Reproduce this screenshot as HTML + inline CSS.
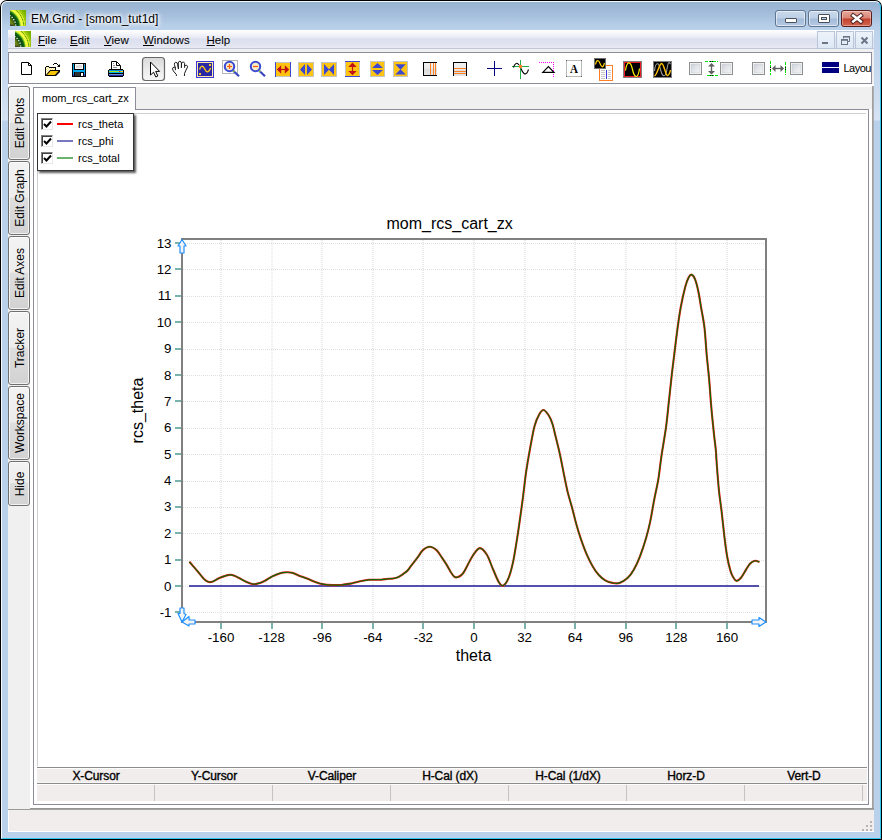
<!DOCTYPE html><html><head><meta charset="utf-8"><title>EM.Grid - [smom_tut1d]</title><style>
*{box-sizing:border-box;margin:0;padding:0}
html,body{width:882px;height:840px;overflow:hidden;background:#fff}
body{position:relative;font-family:"Liberation Sans",sans-serif;font-size:12px;color:#000}
.abs{position:absolute}
#win{position:absolute;left:0;top:0;width:882px;height:840px;border-radius:7px 7px 0 0;background:#000;overflow:hidden}
#glass{position:absolute;left:1px;top:1px;width:880px;height:838px;border-radius:6px 6px 0 0;
 background:linear-gradient(180deg,#97b4d3 1px,#9fb9d7 9px,#a5bfdc 14px,#adc6e1 19px,#b6cde7 24px,#b9d0ea 28px,#bdd3ec 30px,#c9dbf0 84px,#d5e3f4 119px,#b9d1ea 120px,#b9d1ea 100%);}
#glassr{display:none}
#hl{position:absolute;left:1px;top:1px;width:880px;height:838px;border-radius:6px 6px 0 0;border:1px solid rgba(255,255,255,.9);border-right-color:#35c6f0;border-bottom-color:#35c6f0}
#title{position:absolute;left:31px;top:11px;height:16px;line-height:16px;font-size:12px;white-space:nowrap;
 text-shadow:0 0 6px #fff,0 0 6px #fff,0 0 4px #fff,0 0 3px #fff}
.cb{position:absolute;top:10px;height:17px;border:1px solid #5f7590;border-radius:3px;
 background:linear-gradient(180deg,#c9d9ec 0%,#bccfe6 48%,#a3bbd9 52%,#b4c9e3 100%);box-shadow:inset 0 0 0 1px rgba(255,255,255,.55)}
#cclose{background:linear-gradient(180deg,#e7a99b 0%,#d98474 48%,#c2402c 52%,#d2674f 100%);border-color:#5a1b1b;box-shadow:inset 0 0 0 1px rgba(255,255,255,.35)}
#menubar{position:absolute;left:8px;top:30px;width:866px;height:19px;
 background:linear-gradient(180deg,#ffffff 0px,#f4f5fa 4px,#e6e8f3 8px,#dcdfee 9px,#e0e3f0 14px,#e6e8f3 17.5px,#c3c7d6 18px,#c3c7d6 19px)}
.mi{position:absolute;top:33px;height:14px;line-height:14px;font-size:11.5px;white-space:nowrap}
.mi u{text-decoration:underline;text-underline-offset:1px}
.mdi{position:absolute;top:31px;width:18px;height:18px;border:1px solid #b9c6da;background:linear-gradient(180deg,#eef3fa,#dde8f5)}
#client{position:absolute;left:8px;top:49px;width:866px;height:783px;background:#f0f0f0}
#tbar{position:absolute;left:8px;top:52px;width:864px;height:32px;border:1px solid #8b8e9a;background:#fff;overflow:hidden}
#wband{position:absolute;left:8px;top:84px;width:866px;height:3px;background:#fff}
.stab{position:absolute;left:8px;width:22px;border:1px solid #707070;border-radius:3px;
 background:linear-gradient(180deg,#f3f3f3 0%,#ececec 49%,#dedede 50%,#d2d2d2 100%);box-shadow:inset 0 0 0 1px rgba(255,255,255,.7)}
.stab span{position:absolute;left:calc(50% + 1px);top:50%;white-space:nowrap;font-size:12px;line-height:14px;transform:translate(-50%,-50%) rotate(-90deg)}
#white{position:absolute;left:30px;top:87px;width:842px;height:721px;background:#fff}
#strip{position:absolute;left:136px;top:87px;width:736px;height:22px;background:#f0f0f0}
#page{position:absolute;left:33px;top:109px;width:836px;height:696px;border:1px solid #8b8e9a;border-top:none}
#pagetop{position:absolute;left:135px;top:109px;width:734px;height:1px;background:#8b8e9a}
#tab{position:absolute;left:33px;top:87px;width:103px;height:23px;border:1px solid #8b8e9a;border-bottom:none;background:#fff}
#tab span{position:absolute;left:8px;top:4px;font-size:11px;line-height:13px;white-space:nowrap}
#rborder{position:absolute;left:872px;top:86px;width:2px;height:724px;background:linear-gradient(90deg,#9a9a9a,#b4b4b4)}
#gtop{position:absolute;left:37px;top:113px;width:829px;height:1px;background:#d0d0d0}
#gleft{position:absolute;left:37px;top:113px;width:1px;height:653px;background:#d0d0d0}
#legend{position:absolute;left:37px;top:113px;width:97px;height:58px;border:1px solid #333;background:#fff;box-shadow:2px 2px 2px rgba(0,0,0,.65)}
.lg{position:absolute;left:41px;font-size:11px;line-height:13px;white-space:nowrap}
.chk{position:absolute;left:41px;width:12px;height:12px;background:#fff;border:1px solid #808080;border-right-color:#e8e8e8;border-bottom-color:#e8e8e8;box-shadow:inset 1px 1px 0 #404040}
#tbl{position:absolute;left:37px;top:767px;width:830px;height:34px;background:#f0edec}
#tbl .l1{position:absolute;left:0;top:0;width:100%;height:2px;background:linear-gradient(180deg,#8c8c8c 50%,#fff 50%)}
#tbl .l2{position:absolute;left:0;top:15px;width:100%;height:3px;background:linear-gradient(180deg,#f8f6f6 33%,#8c8c8c 33%,#8c8c8c 67%,#fff 67%)}
.th{position:absolute;top:770px;width:118px;text-align:center;font-size:12px;font-weight:normal;-webkit-text-stroke:.35px #000;letter-spacing:-.1px;line-height:12px;white-space:nowrap}
.sep{position:absolute;top:785px;width:1px;height:16px;background:#c4c2c2}
#dline{position:absolute;left:30px;top:808px;width:844px;height:2px;background:linear-gradient(180deg,#8f8f8f,#a8a8a8)}
#dline2{position:absolute;left:8px;top:809px;width:22px;height:1px;background:#9a9a9a}
#status{position:absolute;left:8px;top:810px;width:866px;height:22px;background:#f0edec;border-left:1px solid #fff;border-bottom:1px solid #fff}
</style></head><body>
<div id="win"><div id="glass"></div><div id="glassr"></div><div id="hl"></div></div>
<svg class="abs" style="left:10px;top:10px" width="16" height="16" viewBox="0 0 16 16">
<defs><radialGradient id="ig10" gradientUnits="userSpaceOnUse" cx="-8" cy="17" r="30"><stop offset=".36" stop-color="#6a8414"/><stop offset=".43" stop-color="#3e5c10"/><stop offset=".45" stop-color="#0c4612"/><stop offset=".53" stop-color="#0a5212"/><stop offset=".575" stop-color="#1c6c18"/><stop offset=".605" stop-color="#7cc422"/><stop offset=".64" stop-color="#ecfa3c"/><stop offset=".69" stop-color="#f8ff44"/><stop offset=".715" stop-color="#c4de20"/><stop offset=".727" stop-color="#5c9a10"/><stop offset=".74" stop-color="#b4da18"/><stop offset=".77" stop-color="#e0f030"/><stop offset=".79" stop-color="#8cbc10"/><stop offset=".81" stop-color="#a4cc10"/><stop offset=".86" stop-color="#80b800"/><stop offset="1" stop-color="#6ca800"/></radialGradient></defs>
<rect width="16" height="16" fill="url(#ig10)"/>
<circle cx="-8" cy="17" r="13.9" fill="none" stroke="#fff" stroke-width="1.1" stroke-dasharray="1.4 1.4"/>
<rect x="0" y="14.5" width="3.5" height="1.5" fill="#3a3a30" opacity=".8"/>
</svg>
<div id="title">EM.Grid - [smom_tut1d]</div>
<div class="cb" style="left:775px;width:31px"><div class="abs" style="left:9px;top:7px;width:12px;height:5px;border:1px solid #4a5058;border-radius:1px;background:#fff"></div></div>
<div class="cb" style="left:808px;width:31px"><div class="abs" style="left:9px;top:3px;width:12px;height:9px;border:1px solid #4a5058;border-radius:1px;background:#fff"><div class="abs" style="left:2px;top:2px;width:6px;height:3px;border:1px solid #4a5058;background:#b9cde6"></div></div></div>
<div class="cb" id="cclose" style="left:841px;width:31px"><svg class="abs" style="left:7px;top:1px" width="16" height="13" viewBox="0 0 16 13"><path d="M4.2 3.6 L11.8 9.4 M11.8 3.6 L4.2 9.4" stroke="#4a2020" stroke-width="4.4" stroke-linecap="square"/><path d="M4.2 3.6 L11.8 9.4 M11.8 3.6 L4.2 9.4" stroke="#fff" stroke-width="2.5" stroke-linecap="square"/></svg></div>
<div id="client"></div>
<div id="menubar"></div>
<svg class="abs" style="left:15px;top:31px" width="16" height="16" viewBox="0 0 16 16">
<defs><radialGradient id="ig15" gradientUnits="userSpaceOnUse" cx="-8" cy="17" r="30"><stop offset=".36" stop-color="#6a8414"/><stop offset=".43" stop-color="#3e5c10"/><stop offset=".45" stop-color="#0c4612"/><stop offset=".53" stop-color="#0a5212"/><stop offset=".575" stop-color="#1c6c18"/><stop offset=".605" stop-color="#7cc422"/><stop offset=".64" stop-color="#ecfa3c"/><stop offset=".69" stop-color="#f8ff44"/><stop offset=".715" stop-color="#c4de20"/><stop offset=".727" stop-color="#5c9a10"/><stop offset=".74" stop-color="#b4da18"/><stop offset=".77" stop-color="#e0f030"/><stop offset=".79" stop-color="#8cbc10"/><stop offset=".81" stop-color="#a4cc10"/><stop offset=".86" stop-color="#80b800"/><stop offset="1" stop-color="#6ca800"/></radialGradient></defs>
<rect width="16" height="16" fill="url(#ig15)"/>
<circle cx="-8" cy="17" r="13.9" fill="none" stroke="#fff" stroke-width="1.1" stroke-dasharray="1.4 1.4"/>
<rect x="0" y="14.5" width="3.5" height="1.5" fill="#3a3a30" opacity=".8"/>
</svg>
<div class="mi" style="left:38px"><u>F</u>ile</div>
<div class="mi" style="left:70px"><u>E</u>dit</div>
<div class="mi" style="left:104px"><u>V</u>iew</div>
<div class="mi" style="left:143px"><u>W</u>indows</div>
<div class="mi" style="left:206.5px"><u>H</u>elp</div>
<div class="mdi" style="left:817px"><div class="abs" style="left:4px;top:10px;width:6px;height:2px;background:#6a7686"></div></div>
<div class="mdi" style="left:836px"><svg class="abs" style="left:3px;top:3px" width="11" height="11" viewBox="0 0 11 11"><path d="M3.5 3.5 V1.5 H9.5 V6.5 H7.5" fill="none" stroke="#6a7686" stroke-width="1"/><rect x="3" y="1" width="7" height="1.6" fill="#6a7686"/><rect x="1.5" y="4.5" width="6" height="5" fill="none" stroke="#6a7686"/><rect x="1" y="4" width="7" height="1.8" fill="#6a7686"/></svg></div>
<div class="mdi" style="left:855px"><svg class="abs" style="left:4px;top:4px" width="9" height="9" viewBox="0 0 9 9"><path d="M1.5 1.5 L7.5 7.5 M7.5 1.5 L1.5 7.5" stroke="#6a7686" stroke-width="2"/></svg></div>
<div id="tbar">
<svg class="abs" style="left:-9px;top:-53px" width="882" height="840" viewBox="0 0 882 840" font-family="Liberation Sans, sans-serif">
<defs><linearGradient id="selg" x1="0" y1="0" x2="0" y2="1"><stop offset="0" stop-color="#d9d9d9"/><stop offset=".5" stop-color="#ebebeb"/><stop offset="1" stop-color="#f7f7f7"/></linearGradient><linearGradient id="cbg" x1="0" y1="0" x2="1" y2="1"><stop offset="0" stop-color="#cdd2da"/><stop offset=".6" stop-color="#e6e8ec"/><stop offset="1" stop-color="#f6f6f6"/></linearGradient><linearGradient id="gg" x1="0" y1="0" x2="0" y2="1"><stop offset="0" stop-color="#f2f2f2"/><stop offset=".5" stop-color="#e8e8e8"/><stop offset=".5" stop-color="#dcdcdc"/><stop offset="1" stop-color="#e4e4e4"/></linearGradient></defs>
<rect x="142.5" y="57.5" width="22" height="23" rx="3" fill="url(#selg)" stroke="#686868" stroke-width="1.2"/>
<g shape-rendering="crispEdges">
<path d="M21.5 62.5 H28.5 L31.5 65.5 V74.5 H21.5 Z" fill="#fff" stroke="#000" shape-rendering="auto"/><path d="M28.5 62.5 V65.5 H31.5" fill="none" stroke="#000" shape-rendering="auto"/>
<rect x="46" y="66" width="3" height="1" fill="#000" />
<rect x="45" y="67" width="1" height="9" fill="#000" />
<rect x="49" y="67" width="7" height="1" fill="#000" />
<rect x="55" y="67" width="1" height="3" fill="#000" />
<rect x="46" y="67" width="3" height="7" fill="#ffe680" />
<rect x="49" y="68" width="6" height="2" fill="#ffe680" />
<path d="M46 68h1v1h-1zM48 68h1v1h-1zM50 68h1v1h-1zM52 68h1v1h-1zM54 68h1v1h-1zM47 69h1v1h-1zM49 69h1v1h-1zM51 69h1v1h-1zM53 69h1v1h-1zM46 70h1v1h-1zM48 70h1v1h-1zM47 71h1v1h-1zM46 72h1v1h-1zM47 67h1v1h-1z" fill="#fff"/>
<polygon points="50,70 60,70 60,72 56,76 45,76 45,75 46,75" fill="#000" shape-rendering="auto"/>
<polygon points="50.5,71 58.5,71 55,75 47,75" fill="#f8c400" shape-rendering="auto"/>
<rect x="53" y="64" width="1" height="1" fill="#000" />
<rect x="54" y="63" width="3" height="1" fill="#000" />
<rect x="57" y="64" width="1" height="1" fill="#000" />
<rect x="58" y="65" width="1" height="1" fill="#000" />
<polygon points="60,64 60,67 57,67" fill="#000" shape-rendering="auto"/>
<rect x="72" y="63" width="14" height="14" fill="#000" />
<rect x="73" y="64" width="12" height="10" fill="#00a8f0" />
<rect x="73" y="74" width="12" height="2" fill="#4444e0" />
<rect x="74" y="64" width="10" height="6" fill="#000" />
<rect x="75" y="64" width="8" height="5" fill="#fff" />
<rect x="76" y="65" width="6" height="3" fill="#dcdcdc" />
<rect x="84" y="64" width="1" height="1" fill="#909090" />
<rect x="74" y="72" width="10" height="4" fill="#000" />
<rect x="75" y="72" width="5" height="4" fill="#303030" />
<rect x="81" y="73" width="2" height="3" fill="#fff" />
<path d="M111.5 69 V61.5 H116.5 L120.5 65.5 V69" fill="#fff" stroke="#000" shape-rendering="auto"/><path d="M116.5 62 V65.5 H120" fill="none" stroke="#000" shape-rendering="auto"/>
<rect x="113" y="63" width="1" height="1" fill="#909090" />
<rect x="113" y="65" width="2" height="1" fill="#909090" />
<rect x="113" y="67" width="4" height="1" fill="#909090" />
<rect x="109" y="69" width="14" height="1" fill="#000" />
<rect x="108" y="70" width="16" height="6" fill="#000" />
<rect x="109" y="76" width="14" height="1" fill="#000" />
<rect x="109" y="70" width="14" height="1" fill="#0090e0" />
<rect x="109" y="71" width="10" height="1" fill="#a4e020" />
<rect x="119" y="71" width="1" height="1" fill="#f02020" />
<rect x="120" y="71" width="1" height="1" fill="#ff9000" />
<rect x="121" y="71" width="2" height="1" fill="#ffe800" />
<rect x="109" y="72" width="14" height="1" fill="#00b0e8" />
<rect x="109" y="74" width="14" height="1" fill="#6a94d8" />
<rect x="109" y="75" width="14" height="1" fill="#2424a4" />
</g>
<path d="M150.5 62 V75 L153.6 72.2 L155.8 77 L157.8 76 L155.7 71.4 H159.6 Z" fill="#fff" stroke="#000" stroke-width="1" stroke-linejoin="miter"/>
<path d="M176.4 75.6 L176.4 74.6 L173.3 70.9 Q171.8 68.5 173 67.6 Q174.5 66.8 175.3 67.6 L175.4 69.8 M175.3 67.6 L174.4 64.6 Q174.2 62.5 175.7 62.3 Q177.3 62.3 177.6 64 L178.4 68.6 M178.4 68.6 L178.2 63 Q178.6 61.3 179.8 61.3 Q181.2 61.3 181.4 63 L181.4 67.4 M181.4 67.4 L181.6 63 Q182 62 183.2 62.1 Q184.6 62.3 184.6 63.5 L184.6 67.4 M185.2 65.4 Q186.5 64.9 187.3 65.8 Q188 66.8 187.2 67.8 L185.6 70.9 L184.6 73.4 L184.4 75.6" fill="none" stroke="#1a1a1a" stroke-width="1" stroke-linecap="round" stroke-linejoin="round"/>
<g shape-rendering="crispEdges">
<rect x="196" y="61" width="18" height="17" fill="#3838d8" />
<rect x="197" y="62" width="16" height="15" fill="#ffe9a8" />
<rect x="198" y="63" width="14" height="13" fill="#2828a4" />
<rect x="209" y="64" width="2" height="2" fill="#ffc820" />
<rect x="199" y="73" width="2" height="2" fill="#ffc820" />
</g>
<path d="M199.6 69.6 C200.4 65.6 203 65 204.6 68.8 S208.6 73.4 210.6 68" fill="none" stroke="#ffc820" stroke-width="1.3"/>
<rect x="222.5" y="60.5" width="15" height="13" fill="#fff" stroke="#b4b4b4"/>
<line x1="233.0" y1="70.5" x2="239.0" y2="76.2" stroke="#3a46c8" stroke-width="2.2"/>
<line x1="232.8" y1="70.3" x2="234.3" y2="71.8" stroke="#a8d820" stroke-width="1.6"/>
<circle cx="229.5" cy="66.5" r="4.7" fill="#f6ecc8" stroke="#3c4cd4" stroke-width="2.1"/>
<line x1="227.0" y1="66.5" x2="232.0" y2="66.5" stroke="#ff5a10" stroke-width="1.2"/>
<line x1="229.5" y1="64" x2="229.5" y2="69" stroke="#ff5a10" stroke-width="1.2"/>
<line x1="259.0" y1="70.5" x2="265.0" y2="76.2" stroke="#3a46c8" stroke-width="2.2"/>
<line x1="258.8" y1="70.3" x2="260.3" y2="71.8" stroke="#a8d820" stroke-width="1.6"/>
<circle cx="255.5" cy="66.5" r="4.7" fill="#f6ecc8" stroke="#3c4cd4" stroke-width="2.1"/>
<line x1="253.0" y1="66.5" x2="258.0" y2="66.5" stroke="#ff5a10" stroke-width="1.2"/>
<g shape-rendering="crispEdges">
<rect x="275" y="62" width="16" height="15" fill="#c4c4c4" />
<rect x="275" y="63" width="16" height="13" fill="#ffc412" />
<rect x="275" y="62" width="1" height="15" fill="#3c48d0" />
<rect x="290" y="62" width="1" height="15" fill="#3c48d0" />
<rect x="298" y="62" width="16" height="15" fill="#c4c4c4" />
<rect x="299" y="63" width="14" height="13" fill="#ffc412" />
<rect x="321" y="62" width="16" height="15" fill="#c4c4c4" />
<rect x="322" y="63" width="14" height="13" fill="#ffc412" />
<rect x="345" y="61" width="15" height="16" fill="#c4c4c4" />
<rect x="346" y="62" width="13" height="14" fill="#ffc412" />
<rect x="345" y="61" width="15" height="1" fill="#3c48d0" />
<rect x="345" y="76" width="15" height="1" fill="#3c48d0" />
<rect x="370" y="61" width="15" height="16" fill="#c4c4c4" />
<rect x="371" y="62" width="13" height="14" fill="#ffc412" />
<rect x="393" y="61" width="15" height="16" fill="#c4c4c4" />
<rect x="394" y="62" width="13" height="14" fill="#ffc412" />
</g>
<path d="M276.8 69.5 L281.2 65.3 V73.7 Z M289.2 69.5 L284.8 65.3 V73.7 Z" fill="#c01414"/><line x1="280" x2="286" y1="69.5" y2="69.5" stroke="#c01414" stroke-width="1.2"/>
<path d="M300 69.5 L305 64 V75 Z M312 69.5 L307 64 V75 Z" fill="#3c48d0"/>
<path d="M324 64 V75 L329.2 69.5 Z M334 64 V75 L328.8 69.5 Z" fill="#3c48d0"/>
<path d="M352.5 62.6 L348.3 67 H356.7 Z M352.5 75.2 L348.3 70.9 H356.7 Z" fill="#c01414"/><line x1="352.5" x2="352.5" y1="66" y2="72" stroke="#c01414" stroke-width="1.2"/>
<path d="M377.5 63 L372 68 H383 Z M377.5 75 L372 70 H383 Z" fill="#3c48d0"/>
<path d="M395.3 64.3 H405.7 L400.5 69.7 Z M395.3 74.6 H405.7 L400.5 69.3 Z" fill="#3c48d0"/>
<g shape-rendering="crispEdges">
<rect x="424" y="63" width="13" height="12" fill="url(#gg)" />
<rect x="423" y="62" width="14" height="1" fill="#000" />
<rect x="423" y="75" width="14" height="1" fill="#000" />
<rect x="423" y="62" width="1" height="14" fill="#000" />
<rect x="430" y="63" width="1" height="12" fill="#ff8020" />
<rect x="433" y="63" width="1" height="12" fill="#ff8020" />
<rect x="435" y="63" width="1" height="12" fill="#ff8020" />
<rect x="454" y="63" width="12" height="13" fill="url(#gg)" />
<rect x="453" y="62" width="14" height="1" fill="#000" />
<rect x="453" y="62" width="1" height="14" fill="#000" />
<rect x="466" y="62" width="1" height="14" fill="#000" />
<rect x="454" y="68" width="12" height="1" fill="#ff8020" />
<rect x="454" y="71" width="12" height="1" fill="#ff8020" />
<rect x="454" y="73" width="12" height="1" fill="#ff8020" />
<rect x="487" y="68" width="15" height="1" fill="#000080" />
<rect x="494" y="61" width="1" height="15" fill="#000080" />
<rect x="520" y="60" width="1" height="19" fill="#22b14c" />
<rect x="512" y="66" width="17" height="1" fill="#22b14c" />
<rect x="519" y="65" width="3" height="3" fill="#ff7f27" />
</g>
<path d="M513.5 67.5 C514.5 64 517 61.5 519 65 M521 68.5 C522.5 73 525.5 76 527.5 72 L528.5 69.5" fill="none" stroke="#000" stroke-width="1.1"/>
<g shape-rendering="crispEdges"><line x1="539" x2="555" y1="62.5" y2="62.5" stroke="#ff00ff" stroke-dasharray="1 1"/><line x1="553.5" x2="553.5" y1="62" y2="78" stroke="#ff00ff" stroke-dasharray="1 1"/></g>
<path d="M542.8 72.3 L548.4 66.6 L554 72.3 Z" fill="#fff" stroke="#000" stroke-width="1.2"/>
<rect x="566.5" y="60.5" width="15" height="16" fill="#fff" stroke="#b8b8b8"/>
<g shape-rendering="crispEdges">
<rect x="566" y="60" width="1" height="1" fill="#606060" />
<rect x="581" y="60" width="1" height="1" fill="#606060" />
<rect x="566" y="76" width="1" height="1" fill="#606060" />
<rect x="581" y="76" width="1" height="1" fill="#606060" />
</g>
<text x="574" y="72.6" font-family="Liberation Serif, serif" font-weight="bold" font-size="13" text-anchor="middle" textLength="8" lengthAdjust="spacingAndGlyphs" fill="#000">A</text>
<g shape-rendering="crispEdges">
<rect x="599" y="65" width="14" height="16" fill="#ff7f27" />
<rect x="600" y="66" width="12" height="14" fill="#fff" />
<rect x="601" y="70" width="4" height="1" fill="#c8c8c8" />
<rect x="608" y="70" width="3" height="1" fill="#c8c8c8" />
<rect x="601" y="72" width="4" height="1" fill="#c8c8c8" />
<rect x="608" y="72" width="3" height="1" fill="#c8c8c8" />
<rect x="601" y="74" width="4" height="1" fill="#c8c8c8" />
<rect x="608" y="74" width="3" height="1" fill="#c8c8c8" />
<rect x="601" y="76" width="4" height="1" fill="#c8c8c8" />
<rect x="608" y="76" width="3" height="1" fill="#c8c8c8" />
<rect x="601" y="78" width="4" height="1" fill="#c8c8c8" />
<rect x="608" y="78" width="3" height="1" fill="#c8c8c8" />
<rect x="606" y="70" width="1" height="9" fill="#3c3cd8" />
<rect x="594" y="58" width="12" height="11" fill="#707070" />
<rect x="595" y="59" width="10" height="9" fill="#000" />
<rect x="623" y="61" width="19" height="17" fill="#808080" />
<rect x="624" y="62" width="17" height="15" fill="#ed1c24" />
<rect x="625" y="63" width="15" height="13" fill="#000" />
<rect x="653" y="61" width="19" height="17" fill="#808080" />
<rect x="654" y="62" width="17" height="15" fill="#000" />
</g>
<path d="M595.5 64.5 C596.5 59.5 598.5 59.5 600 63.5 S603 68.5 604.5 63" fill="none" stroke="#ffd400" stroke-width="1.2"/>
<path d="M625.5 70.5 C627 60.5 630.5 60.5 632.5 69.5 S638 79.5 639.5 68.5" fill="none" stroke="#fff200" stroke-width="1.2"/>
<path d="M654.5 71 C655.5 61.5 658.5 61.5 660.5 69.5 S665.5 78.5 667 69 S669.5 63 670.5 64" fill="none" stroke="#9a9a9a" stroke-width="1.1"/>
<path d="M654.5 76 C657.5 74.5 659 64 661.5 63.5 S665.5 76 667.5 75.5 S670 72 670.5 70" fill="none" stroke="#ffc000" stroke-width="1.4"/>
<rect x="689.5" y="62.5" width="12" height="12" fill="#fff" stroke="#8e8f8f"/><rect x="691" y="64" width="9" height="9" fill="url(#cbg)" stroke="#c4c8ce" stroke-width=".6"/>
<rect x="720.5" y="62.5" width="12" height="12" fill="#fff" stroke="#8e8f8f"/><rect x="722" y="64" width="9" height="9" fill="url(#cbg)" stroke="#c4c8ce" stroke-width=".6"/>
<rect x="752.5" y="62.5" width="12" height="12" fill="#fff" stroke="#8e8f8f"/><rect x="754" y="64" width="9" height="9" fill="url(#cbg)" stroke="#c4c8ce" stroke-width=".6"/>
<rect x="790.5" y="62.5" width="12" height="12" fill="#fff" stroke="#8e8f8f"/><rect x="792" y="64" width="9" height="9" fill="url(#cbg)" stroke="#c4c8ce" stroke-width=".6"/>
<g shape-rendering="crispEdges">
<line x1="705" x2="718" y1="61.5" y2="61.5" stroke="#00e000" stroke-dasharray="3 1"/><line x1="707" x2="718" y1="75.5" y2="75.5" stroke="#00e000" stroke-dasharray="3 1"/>
<rect x="710" y="61" width="1" height="1" fill="#000" />
<rect x="712" y="61" width="1" height="1" fill="#000" />
<rect x="710" y="75" width="1" height="1" fill="#000" />
<rect x="712" y="75" width="1" height="1" fill="#000" />
<line x1="770.5" x2="770.5" y1="61" y2="75" stroke="#00e000" stroke-dasharray="3 1"/><line x1="785.5" x2="785.5" y1="62" y2="75" stroke="#00e000" stroke-dasharray="3 1"/>
<rect x="770" y="67" width="1" height="1" fill="#000" />
<rect x="770" y="69" width="1" height="1" fill="#000" />
<rect x="785" y="67" width="1" height="1" fill="#000" />
<rect x="785" y="69" width="1" height="1" fill="#000" />
</g>
<path d="M711.5 63 L708 66.5 H715 Z M711.5 74.5 L708 71 H715 Z" fill="#606060"/><line x1="711.5" x2="711.5" y1="66" y2="72" stroke="#606060" stroke-width="1.4"/>
<path d="M772 68.5 L775.5 65 V72 Z M784 68.5 L780.5 65 V72 Z" fill="#606060"/><line x1="775" x2="781" y1="68.5" y2="68.5" stroke="#606060" stroke-width="1.4"/>
<g shape-rendering="crispEdges">
<rect x="822" y="62" width="17" height="5" fill="#000080" />
<rect x="822" y="68" width="17" height="5" fill="#000080" />
</g>
<text x="843.5" y="71.6" font-size="11" letter-spacing="-0.5" fill="#000">Layout</text>
</svg>
</div>
<div id="wband"></div>
<div class="stab" style="top:86px;height:74px"><span>Edit Plots</span></div>
<div class="stab" style="top:161px;height:74px"><span>Edit Graph</span></div>
<div class="stab" style="top:236px;height:74px"><span>Edit Axes</span></div>
<div class="stab" style="top:311px;height:74px"><span>Tracker</span></div>
<div class="stab" style="top:386px;height:74px"><span>Workspace</span></div>
<div class="stab" style="top:461px;height:45px"><span>Hide</span></div>
<div id="white"></div><div id="strip"></div><div id="page"></div><div id="pagetop"></div><div id="tab"><span>mom_rcs_cart_zx</span></div>
<div id="rborder"></div>
<div id="gtop"></div><div id="gleft"></div>
<svg class="abs" style="left:0;top:0" width="882" height="840" viewBox="0 0 882 840" font-family="Liberation Sans, sans-serif">
<g shape-rendering="crispEdges">
<line x1="183" x2="765" y1="612.5" y2="612.5" stroke="#e0e0e0" stroke-width="1" stroke-dasharray="1 1"/>
<line x1="183" x2="765" y1="586.5" y2="586.5" stroke="#e0e0e0" stroke-width="1" stroke-dasharray="1 1"/>
<line x1="183" x2="765" y1="560.5" y2="560.5" stroke="#e0e0e0" stroke-width="1" stroke-dasharray="1 1"/>
<line x1="183" x2="765" y1="533.5" y2="533.5" stroke="#e0e0e0" stroke-width="1" stroke-dasharray="1 1"/>
<line x1="183" x2="765" y1="507.5" y2="507.5" stroke="#e0e0e0" stroke-width="1" stroke-dasharray="1 1"/>
<line x1="183" x2="765" y1="481.5" y2="481.5" stroke="#e0e0e0" stroke-width="1" stroke-dasharray="1 1"/>
<line x1="183" x2="765" y1="454.5" y2="454.5" stroke="#e0e0e0" stroke-width="1" stroke-dasharray="1 1"/>
<line x1="183" x2="765" y1="428.5" y2="428.5" stroke="#e0e0e0" stroke-width="1" stroke-dasharray="1 1"/>
<line x1="183" x2="765" y1="401.5" y2="401.5" stroke="#e0e0e0" stroke-width="1" stroke-dasharray="1 1"/>
<line x1="183" x2="765" y1="375.5" y2="375.5" stroke="#e0e0e0" stroke-width="1" stroke-dasharray="1 1"/>
<line x1="183" x2="765" y1="349.5" y2="349.5" stroke="#e0e0e0" stroke-width="1" stroke-dasharray="1 1"/>
<line x1="183" x2="765" y1="322.5" y2="322.5" stroke="#e0e0e0" stroke-width="1" stroke-dasharray="1 1"/>
<line x1="183" x2="765" y1="296.5" y2="296.5" stroke="#e0e0e0" stroke-width="1" stroke-dasharray="1 1"/>
<line x1="183" x2="765" y1="269.5" y2="269.5" stroke="#e0e0e0" stroke-width="1" stroke-dasharray="1 1"/>
<line x1="183" x2="765" y1="243.5" y2="243.5" stroke="#e0e0e0" stroke-width="1" stroke-dasharray="1 1"/>
<line x1="221" x2="221" y1="240" y2="621" stroke="#ebebeb" stroke-width="2" stroke-dasharray="1 1"/>
<line x1="272" x2="272" y1="240" y2="621" stroke="#ebebeb" stroke-width="2" stroke-dasharray="1 1"/>
<line x1="322" x2="322" y1="240" y2="621" stroke="#ebebeb" stroke-width="2" stroke-dasharray="1 1"/>
<line x1="373" x2="373" y1="240" y2="621" stroke="#ebebeb" stroke-width="2" stroke-dasharray="1 1"/>
<line x1="423" x2="423" y1="240" y2="621" stroke="#ebebeb" stroke-width="2" stroke-dasharray="1 1"/>
<line x1="474" x2="474" y1="240" y2="621" stroke="#ebebeb" stroke-width="2" stroke-dasharray="1 1"/>
<line x1="525" x2="525" y1="240" y2="621" stroke="#ebebeb" stroke-width="2" stroke-dasharray="1 1"/>
<line x1="575" x2="575" y1="240" y2="621" stroke="#ebebeb" stroke-width="2" stroke-dasharray="1 1"/>
<line x1="626" x2="626" y1="240" y2="621" stroke="#ebebeb" stroke-width="2" stroke-dasharray="1 1"/>
<line x1="676" x2="676" y1="240" y2="621" stroke="#ebebeb" stroke-width="2" stroke-dasharray="1 1"/>
<line x1="727" x2="727" y1="240" y2="621" stroke="#ebebeb" stroke-width="2" stroke-dasharray="1 1"/>
<rect x="175" y="611" width="6" height="2" fill="#78b4ac"/>
<rect x="175" y="585" width="6" height="2" fill="#78b4ac"/>
<rect x="175" y="559" width="6" height="2" fill="#78b4ac"/>
<rect x="175" y="532" width="6" height="2" fill="#78b4ac"/>
<rect x="175" y="506" width="6" height="2" fill="#78b4ac"/>
<rect x="175" y="480" width="6" height="2" fill="#78b4ac"/>
<rect x="175" y="453" width="6" height="2" fill="#78b4ac"/>
<rect x="175" y="427" width="6" height="2" fill="#78b4ac"/>
<rect x="175" y="400" width="6" height="2" fill="#78b4ac"/>
<rect x="175" y="374" width="6" height="2" fill="#78b4ac"/>
<rect x="175" y="348" width="6" height="2" fill="#78b4ac"/>
<rect x="175" y="321" width="6" height="2" fill="#78b4ac"/>
<rect x="175" y="295" width="6" height="2" fill="#78b4ac"/>
<rect x="175" y="268" width="6" height="2" fill="#78b4ac"/>
<rect x="175" y="242" width="6" height="2" fill="#78b4ac"/>
<rect x="220" y="623" width="2" height="6" fill="#78b4ac"/>
<rect x="271" y="623" width="2" height="6" fill="#78b4ac"/>
<rect x="321" y="623" width="2" height="6" fill="#78b4ac"/>
<rect x="372" y="623" width="2" height="6" fill="#78b4ac"/>
<rect x="422" y="623" width="2" height="6" fill="#78b4ac"/>
<rect x="473" y="623" width="2" height="6" fill="#78b4ac"/>
<rect x="524" y="623" width="2" height="6" fill="#78b4ac"/>
<rect x="574" y="623" width="2" height="6" fill="#78b4ac"/>
<rect x="625" y="623" width="2" height="6" fill="#78b4ac"/>
<rect x="675" y="623" width="2" height="6" fill="#78b4ac"/>
<rect x="726" y="623" width="2" height="6" fill="#78b4ac"/>
<rect x="182" y="239" width="584" height="383" fill="none" stroke="#808080" stroke-width="2"/>
</g>
<line x1="189" x2="759" y1="586" y2="586" stroke="#5252ac" stroke-width="2" shape-rendering="crispEdges"/>
<path d="M189.4 561.8C190.7 563.3 194.6 567.8 197.0 570.6C199.4 573.4 202.0 576.9 203.8 578.8C205.6 580.6 206.6 581.2 208.0 581.7C209.4 582.2 210.3 582.4 212.3 581.7C214.3 581.1 217.2 578.9 220.0 577.8C222.8 576.7 226.9 575.2 229.3 574.9C231.7 574.5 232.7 575.1 234.4 575.7C236.1 576.3 237.4 577.2 239.5 578.3C241.6 579.4 244.8 581.2 247.2 582.2C249.6 583.2 251.9 584.1 254.0 584.2C256.1 584.3 258.2 583.5 260.0 582.9C261.8 582.3 263.0 581.8 265.0 580.8C267.0 579.8 269.2 577.9 271.8 576.6C274.4 575.3 277.9 573.9 280.3 573.2C282.7 572.5 284.3 572.4 286.3 572.3C288.3 572.2 290.1 572.2 292.2 572.8C294.3 573.4 296.4 574.7 299.0 575.7C301.6 576.7 304.8 577.7 307.6 578.8C310.4 579.9 313.4 581.3 316.0 582.2C318.6 583.1 321.1 583.8 322.9 584.2C324.7 584.6 324.7 584.6 326.8 584.8C328.9 584.9 332.8 585.1 335.3 585.1C337.9 585.1 339.6 585.0 342.1 584.8C344.7 584.5 347.8 584.1 350.6 583.6C353.4 583.1 356.1 582.1 359.1 581.5C362.1 580.9 364.8 580.1 368.5 579.8C372.2 579.5 377.9 579.9 381.2 579.7C384.4 579.5 386.0 579.0 388.0 578.8C390.0 578.6 391.4 578.8 393.1 578.5C394.8 578.2 396.5 577.9 398.2 577.1C399.9 576.3 401.7 575.0 403.3 573.9C404.9 572.8 406.2 572.0 407.6 570.5C409.0 569.0 410.1 567.1 411.8 564.9C413.5 562.7 416.0 559.7 417.8 557.2C419.6 554.7 420.9 551.9 422.9 550.1C424.9 548.4 427.4 546.7 429.7 546.7C432.0 546.7 434.5 548.4 436.5 550.1C438.5 551.9 439.9 554.7 441.6 557.2C443.3 559.7 445.1 562.4 446.7 564.9C448.3 567.4 449.7 570.5 451.0 572.5C452.3 574.5 453.3 576.0 454.4 576.8C455.5 577.6 456.7 577.4 457.8 577.1C458.9 576.8 460.1 576.1 461.2 575.1C462.3 574.1 462.4 574.6 464.3 571.4C466.2 568.2 470.0 559.9 472.6 556.0C475.2 552.1 477.4 548.3 479.8 548.1C482.2 547.9 484.7 551.3 486.9 554.8C489.1 558.3 490.9 564.5 492.9 569.0C494.9 573.5 497.1 579.3 498.8 582.1C500.5 584.9 501.3 586.3 502.9 585.7C504.5 585.1 506.6 582.6 508.3 578.6C510.0 574.6 511.5 569.5 513.1 561.9C514.7 554.3 516.3 543.6 517.9 533.3C519.5 523.0 521.2 510.3 522.6 500.0C524.0 489.7 525.0 479.7 526.2 471.4C527.4 463.1 528.4 457.5 529.8 450.0C531.2 442.5 532.9 432.1 534.5 426.2C536.1 420.2 537.8 417.0 539.3 414.3C540.8 411.6 542.0 409.8 543.6 410.0C545.2 410.2 547.3 413.2 548.8 415.5C550.3 417.8 551.2 420.0 552.4 423.8C553.6 427.6 554.7 432.9 556.0 438.1C557.3 443.3 558.6 448.5 560.0 454.8C561.4 461.1 563.0 469.9 564.3 476.2C565.6 482.5 566.6 487.8 567.9 492.9C569.2 498.0 570.5 502.0 571.9 507.1C573.3 512.2 574.7 518.4 576.2 523.8C577.7 529.2 579.2 534.1 581.0 539.3C582.8 544.5 584.9 550.2 586.9 554.8C588.9 559.4 590.9 563.3 592.9 566.7C594.9 570.1 596.7 572.7 598.8 575.0C600.9 577.3 603.0 579.1 605.3 580.4C607.6 581.7 610.0 582.5 612.4 582.9C614.8 583.3 617.0 583.8 619.6 582.9C622.2 582.0 625.4 580.0 627.8 577.8C630.2 575.6 631.9 573.2 633.9 569.6C635.9 566.0 638.0 561.6 640.0 556.3C642.0 551.0 644.4 543.8 646.1 538.0C647.8 532.2 648.8 528.1 650.2 521.6C651.6 515.1 652.9 506.3 654.3 499.2C655.7 492.1 657.2 485.9 658.4 478.8C659.6 471.7 660.1 464.9 661.4 456.3C662.7 447.7 664.7 436.7 666.0 427.4C667.3 418.1 668.0 409.0 669.0 400.3C670.0 391.6 670.9 382.6 671.7 375.4C672.5 368.2 673.0 364.9 673.9 357.3C674.8 349.8 676.2 338.4 677.3 330.1C678.4 321.8 679.4 314.7 680.7 307.5C682.0 300.3 683.9 292.1 685.2 287.1C686.5 282.1 687.5 279.7 688.6 277.6C689.7 275.5 690.5 274.4 691.6 274.7C692.7 275.0 693.9 276.4 695.0 279.2C696.1 282.0 697.4 287.0 698.4 291.7C699.4 296.4 700.1 301.5 701.1 307.5C702.1 313.5 703.6 320.0 704.5 327.9C705.4 335.8 706.0 346.7 706.7 355.0C707.5 363.3 708.2 368.9 709.0 377.6C709.8 386.3 710.5 398.3 711.3 407.0C712.0 415.7 712.8 422.4 713.5 429.6C714.2 436.8 715.3 444.9 715.8 450.0C716.3 455.1 716.0 453.6 716.5 460.4C717.0 467.2 718.1 482.5 719.0 491.0C719.9 499.5 720.7 503.9 721.6 511.4C722.5 518.9 723.4 528.4 724.3 535.9C725.2 543.4 726.1 550.5 727.1 556.3C728.1 562.1 729.4 567.2 730.4 570.6C731.4 574.0 731.9 575.0 732.9 576.7C733.9 578.4 734.9 580.6 736.3 580.8C737.6 581.0 739.4 579.7 741.0 577.8C742.6 575.9 744.6 572.0 746.1 569.6C747.6 567.2 748.7 565.0 750.2 563.5C751.7 562.0 753.4 561.0 754.9 560.8C756.4 560.5 758.6 561.8 759.4 562.0" fill="none" stroke="#ff1010" stroke-width="2.1" stroke-linejoin="round"/>
<path d="M189.4 561.8C190.7 563.3 194.6 567.8 197.0 570.6C199.4 573.4 202.0 576.9 203.8 578.8C205.6 580.6 206.6 581.2 208.0 581.7C209.4 582.2 210.3 582.4 212.3 581.7C214.3 581.1 217.2 578.9 220.0 577.8C222.8 576.7 226.9 575.2 229.3 574.9C231.7 574.5 232.7 575.1 234.4 575.7C236.1 576.3 237.4 577.2 239.5 578.3C241.6 579.4 244.8 581.2 247.2 582.2C249.6 583.2 251.9 584.1 254.0 584.2C256.1 584.3 258.2 583.5 260.0 582.9C261.8 582.3 263.0 581.8 265.0 580.8C267.0 579.8 269.2 577.9 271.8 576.6C274.4 575.3 277.9 573.9 280.3 573.2C282.7 572.5 284.3 572.4 286.3 572.3C288.3 572.2 290.1 572.2 292.2 572.8C294.3 573.4 296.4 574.7 299.0 575.7C301.6 576.7 304.8 577.7 307.6 578.8C310.4 579.9 313.4 581.3 316.0 582.2C318.6 583.1 321.1 583.8 322.9 584.2C324.7 584.6 324.7 584.6 326.8 584.8C328.9 584.9 332.8 585.1 335.3 585.1C337.9 585.1 339.6 585.0 342.1 584.8C344.7 584.5 347.8 584.1 350.6 583.6C353.4 583.1 356.1 582.1 359.1 581.5C362.1 580.9 364.8 580.1 368.5 579.8C372.2 579.5 377.9 579.9 381.2 579.7C384.4 579.5 386.0 579.0 388.0 578.8C390.0 578.6 391.4 578.8 393.1 578.5C394.8 578.2 396.5 577.9 398.2 577.1C399.9 576.3 401.7 575.0 403.3 573.9C404.9 572.8 406.2 572.0 407.6 570.5C409.0 569.0 410.1 567.1 411.8 564.9C413.5 562.7 416.0 559.7 417.8 557.2C419.6 554.7 420.9 551.9 422.9 550.1C424.9 548.4 427.4 546.7 429.7 546.7C432.0 546.7 434.5 548.4 436.5 550.1C438.5 551.9 439.9 554.7 441.6 557.2C443.3 559.7 445.1 562.4 446.7 564.9C448.3 567.4 449.7 570.5 451.0 572.5C452.3 574.5 453.3 576.0 454.4 576.8C455.5 577.6 456.7 577.4 457.8 577.1C458.9 576.8 460.1 576.1 461.2 575.1C462.3 574.1 462.4 574.6 464.3 571.4C466.2 568.2 470.0 559.9 472.6 556.0C475.2 552.1 477.4 548.3 479.8 548.1C482.2 547.9 484.7 551.3 486.9 554.8C489.1 558.3 490.9 564.5 492.9 569.0C494.9 573.5 497.1 579.3 498.8 582.1C500.5 584.9 501.3 586.3 502.9 585.7C504.5 585.1 506.6 582.6 508.3 578.6C510.0 574.6 511.5 569.5 513.1 561.9C514.7 554.3 516.3 543.6 517.9 533.3C519.5 523.0 521.2 510.3 522.6 500.0C524.0 489.7 525.0 479.7 526.2 471.4C527.4 463.1 528.4 457.5 529.8 450.0C531.2 442.5 532.9 432.1 534.5 426.2C536.1 420.2 537.8 417.0 539.3 414.3C540.8 411.6 542.0 409.8 543.6 410.0C545.2 410.2 547.3 413.2 548.8 415.5C550.3 417.8 551.2 420.0 552.4 423.8C553.6 427.6 554.7 432.9 556.0 438.1C557.3 443.3 558.6 448.5 560.0 454.8C561.4 461.1 563.0 469.9 564.3 476.2C565.6 482.5 566.6 487.8 567.9 492.9C569.2 498.0 570.5 502.0 571.9 507.1C573.3 512.2 574.7 518.4 576.2 523.8C577.7 529.2 579.2 534.1 581.0 539.3C582.8 544.5 584.9 550.2 586.9 554.8C588.9 559.4 590.9 563.3 592.9 566.7C594.9 570.1 596.7 572.7 598.8 575.0C600.9 577.3 603.0 579.1 605.3 580.4C607.6 581.7 610.0 582.5 612.4 582.9C614.8 583.3 617.0 583.8 619.6 582.9C622.2 582.0 625.4 580.0 627.8 577.8C630.2 575.6 631.9 573.2 633.9 569.6C635.9 566.0 638.0 561.6 640.0 556.3C642.0 551.0 644.4 543.8 646.1 538.0C647.8 532.2 648.8 528.1 650.2 521.6C651.6 515.1 652.9 506.3 654.3 499.2C655.7 492.1 657.2 485.9 658.4 478.8C659.6 471.7 660.1 464.9 661.4 456.3C662.7 447.7 664.7 436.7 666.0 427.4C667.3 418.1 668.0 409.0 669.0 400.3C670.0 391.6 670.9 382.6 671.7 375.4C672.5 368.2 673.0 364.9 673.9 357.3C674.8 349.8 676.2 338.4 677.3 330.1C678.4 321.8 679.4 314.7 680.7 307.5C682.0 300.3 683.9 292.1 685.2 287.1C686.5 282.1 687.5 279.7 688.6 277.6C689.7 275.5 690.5 274.4 691.6 274.7C692.7 275.0 693.9 276.4 695.0 279.2C696.1 282.0 697.4 287.0 698.4 291.7C699.4 296.4 700.1 301.5 701.1 307.5C702.1 313.5 703.6 320.0 704.5 327.9C705.4 335.8 706.0 346.7 706.7 355.0C707.5 363.3 708.2 368.9 709.0 377.6C709.8 386.3 710.5 398.3 711.3 407.0C712.0 415.7 712.8 422.4 713.5 429.6C714.2 436.8 715.3 444.9 715.8 450.0C716.3 455.1 716.0 453.6 716.5 460.4C717.0 467.2 718.1 482.5 719.0 491.0C719.9 499.5 720.7 503.9 721.6 511.4C722.5 518.9 723.4 528.4 724.3 535.9C725.2 543.4 726.1 550.5 727.1 556.3C728.1 562.1 729.4 567.2 730.4 570.6C731.4 574.0 731.9 575.0 732.9 576.7C733.9 578.4 734.9 580.6 736.3 580.8C737.6 581.0 739.4 579.7 741.0 577.8C742.6 575.9 744.6 572.0 746.1 569.6C747.6 567.2 748.7 565.0 750.2 563.5C751.7 562.0 753.4 561.0 754.9 560.8C756.4 560.5 758.6 561.8 759.4 562.0" fill="none" stroke="#066c06" stroke-width="1.2" stroke-linejoin="round"/>
<g font-size="13.33" fill="#000">
<text x="171.5" y="617.0" text-anchor="end">-1</text>
<text x="171.5" y="590.6" text-anchor="end">0</text>
<text x="171.5" y="564.2" text-anchor="end">1</text>
<text x="171.5" y="537.8" text-anchor="end">2</text>
<text x="171.5" y="511.4" text-anchor="end">3</text>
<text x="171.5" y="485.0" text-anchor="end">4</text>
<text x="171.5" y="458.6" text-anchor="end">5</text>
<text x="171.5" y="432.2" text-anchor="end">6</text>
<text x="171.5" y="405.8" text-anchor="end">7</text>
<text x="171.5" y="379.5" text-anchor="end">8</text>
<text x="171.5" y="353.1" text-anchor="end">9</text>
<text x="171.5" y="326.7" text-anchor="end">10</text>
<text x="171.5" y="300.3" text-anchor="end">11</text>
<text x="171.5" y="273.9" text-anchor="end">12</text>
<text x="171.5" y="247.5" text-anchor="end">13</text>
<text x="221.0" y="642" text-anchor="middle">-160</text>
<text x="271.6" y="642" text-anchor="middle">-128</text>
<text x="322.2" y="642" text-anchor="middle">-96</text>
<text x="372.8" y="642" text-anchor="middle">-64</text>
<text x="423.4" y="642" text-anchor="middle">-32</text>
<text x="474.0" y="642" text-anchor="middle">0</text>
<text x="524.6" y="642" text-anchor="middle">32</text>
<text x="575.2" y="642" text-anchor="middle">64</text>
<text x="625.8" y="642" text-anchor="middle">96</text>
<text x="676.4" y="642" text-anchor="middle">128</text>
<text x="727.0" y="642" text-anchor="middle">160</text>
</g>
<text x="449.6" y="229" font-size="16" text-anchor="middle">mom_rcs_cart_zx</text>
<text x="473.5" y="661" font-size="16" text-anchor="middle">theta</text>
<text transform="translate(143,410.5) rotate(-90)" font-size="16" text-anchor="middle">rcs_theta</text>
<path d="M182 239.5 L186 246 L184 246 L184 253 L180 253 L180 246 L178 246 Z" fill="#f4f4f4" stroke="#1e90ff" stroke-width="1.2" stroke-linejoin="round"/>
<path d="M182 622 L178 613.5 L180 613.5 L180 608 L184 608 L184 613.5 L186 614.5 Z" fill="#f4f4f4" stroke="#1e90ff" stroke-width="1.2" stroke-linejoin="round"/>
<path d="M182 622 L189 616.5 L189 620 L195 620 L195 624 L189 624 L189 626 Z" fill="#f4f4f4" stroke="#1e90ff" stroke-width="1.2" stroke-linejoin="round"/>
<path d="M766 622 L759 617.5 L759 620 L752 620 L752 624 L759 624 L759 626.5 Z" fill="#f4f4f4" stroke="#1e90ff" stroke-width="1.2" stroke-linejoin="round"/>
</svg>
<div id="legend"></div>
<div class="chk" style="top:118px"><svg class="abs" style="left:1px;top:1px" width="9" height="9" viewBox="0 0 9 9"><path d="M1 4 L3.5 6.5 L8 1.5" fill="none" stroke="#000" stroke-width="2"/></svg></div>
<div class="abs" style="left:57px;top:123px;width:16px;height:2px;background:#ff0000"></div>
<div class="lg" style="left:78px;top:118px">rcs_theta</div>
<div class="chk" style="top:135px"><svg class="abs" style="left:1px;top:1px" width="9" height="9" viewBox="0 0 9 9"><path d="M1 4 L3.5 6.5 L8 1.5" fill="none" stroke="#000" stroke-width="2"/></svg></div>
<div class="abs" style="left:57px;top:140px;width:16px;height:2px;background:#7878c0"></div>
<div class="lg" style="left:78px;top:135px">rcs_phi</div>
<div class="chk" style="top:152px"><svg class="abs" style="left:1px;top:1px" width="9" height="9" viewBox="0 0 9 9"><path d="M1 4 L3.5 6.5 L8 1.5" fill="none" stroke="#000" stroke-width="2"/></svg></div>
<div class="abs" style="left:57px;top:157px;width:16px;height:2px;background:#6cb46c"></div>
<div class="lg" style="left:78px;top:152px">rcs_total</div>
<div id="tbl"><div class="l1"></div><div class="l2"></div></div>
<div class="th" style="left:37px">X-Cursor</div>
<div class="sep" style="left:154px"></div>
<div class="th" style="left:155px">Y-Cursor</div>
<div class="sep" style="left:272px"></div>
<div class="th" style="left:273px">V-Caliper</div>
<div class="sep" style="left:390px"></div>
<div class="th" style="left:391px">H-Cal (dX)</div>
<div class="sep" style="left:508px"></div>
<div class="th" style="left:509px">H-Cal (1/dX)</div>
<div class="sep" style="left:626px"></div>
<div class="th" style="left:627px">Horz-D</div>
<div class="sep" style="left:744px"></div>
<div class="th" style="left:745px">Vert-D</div>
<div class="sep" style="left:862px"></div>
<div id="dline"></div><div id="dline2"></div><div id="status"></div>
<svg class="abs" style="left:861px;top:820px" width="13" height="12" viewBox="0 0 13 12"><g fill="#b8b4b4"><rect x="9" y="1" width="2" height="2"/><rect x="5" y="5" width="2" height="2"/><rect x="9" y="5" width="2" height="2"/><rect x="1" y="9" width="2" height="2"/><rect x="5" y="9" width="2" height="2"/><rect x="9" y="9" width="2" height="2"/></g></svg>
</body></html>
